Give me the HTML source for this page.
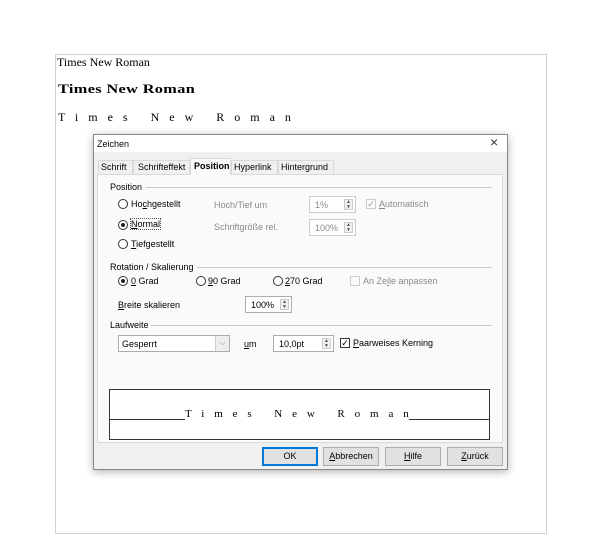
<!DOCTYPE html>
<html><head><meta charset="utf-8"><style>
*{margin:0;padding:0;box-sizing:border-box}
body{width:600px;height:521px;background:#fff;position:relative;overflow:hidden;font-family:"Liberation Sans",sans-serif;font-size:9px;color:#000}
.a{position:absolute;white-space:nowrap}
.tnr{font-family:"Liberation Serif",serif}
.g{color:#8a8a8a}
.rb{position:absolute;width:10px;height:10px;border:1px solid #333;border-radius:50%;background:#fff}
.rb.on::after{content:"";position:absolute;left:2px;top:2px;width:4px;height:4px;border-radius:50%;background:#222}
.line{position:absolute;height:1px;background:#c8c8c8}
.spin{position:absolute;border:1px solid #adadad;background:#fff;height:17px}
.spin .t{position:absolute;left:5px;top:3px}
.spin .s{position:absolute;right:2px;top:2px;width:9px;height:11px;border:1px solid #ccc;background:#f0f0f0;font-size:5px;line-height:5px;text-align:center;color:#555}
.btn{position:absolute;top:447px;height:19px;border:1px solid #adadad;background:#e1e1e1;text-align:center;line-height:17px;font-size:9px}
u{text-decoration:underline}
</style></head><body>
<div class="a" style="left:55px;top:54px;width:492px;height:480px;border:1px solid #d0d0d0"></div>
<div class="a tnr" style="left:57px;top:55px;font-size:12px">Times New Roman</div>
<div class="a tnr" style="left:58px;top:81px;font-size:13px;font-weight:bold;transform:scaleX(1.25);transform-origin:left;letter-spacing:0.3px">Times New Roman</div>
<div class="a tnr" style="left:58px;top:110px;font-size:12px;letter-spacing:10px">Times New Roman</div>

<div class="a" style="left:93px;top:134px;width:415px;height:336px;background:#f0f0f0;border:1px solid #888;box-shadow:0 2px 8px rgba(0,0,0,.3)">
</div>
<div class="a" style="left:94px;top:135px;width:413px;height:17px;background:#fff"></div>
<div class="a" style="left:97px;top:139px;font-size:9px">Zeichen</div>
<div class="a" style="left:490px;top:134px;font-size:14px;color:#333">×</div>

<div class="a" style="left:97px;top:174px;width:406px;height:269px;background:#fafafa;border:1px solid #d9d9d9"></div>
<div class="a" style="left:98px;top:160px;width:35px;height:15px;border:1px solid #d9d9d9;background:#f0f0f0"></div>
<div class="a" style="left:101px;top:162px">Schrift</div>
<div class="a" style="left:133px;top:160px;width:57px;height:15px;border:1px solid #d9d9d9;background:#f0f0f0"></div>
<div class="a" style="left:138px;top:162px">Schrifteffekt</div>
<div class="a" style="left:190px;top:158px;width:41px;height:17px;border:1px solid #d9d9d9;border-bottom:none;background:#fafafa"></div>
<div class="a" style="left:194px;top:161px;font-weight:bold">Position</div>
<div class="a" style="left:231px;top:160px;width:47px;height:15px;border:1px solid #d9d9d9;background:#f0f0f0"></div>
<div class="a" style="left:234px;top:162px">Hyperlink</div>
<div class="a" style="left:278px;top:160px;width:56px;height:15px;border:1px solid #d9d9d9;background:#f0f0f0"></div>
<div class="a" style="left:281px;top:162px">Hintergrund</div>

<div class="a" style="left:110px;top:182px">Position</div>
<div class="line" style="left:146px;top:187px;width:346px"></div>
<div class="rb" style="left:118px;top:199px"></div><div class="a" style="left:131px;top:199px">Ho<u>c</u>hgestellt</div>
<div class="rb on" style="left:118px;top:220px"></div><div class="a" style="left:131px;top:219px;outline:1px dotted #555"><u>N</u>ormal</div>
<div class="rb" style="left:118px;top:239px"></div><div class="a" style="left:131px;top:239px"><u>T</u>iefgestellt</div>
<div class="a g" style="left:214px;top:200px">Hoch/Tief um</div>
<div class="a g" style="left:214px;top:222px">Schriftgröße rel.</div>
<div class="spin g" style="left:309px;top:196px;width:47px;border-color:#ccc"><span class="t">1%</span><span class="s">▲<br>▼</span></div>
<div class="spin g" style="left:309px;top:219px;width:47px;border-color:#ccc"><span class="t">100%</span><span class="s">▲<br>▼</span></div>
<div class="a" style="left:366px;top:199px;width:10px;height:10px;border:1px solid #ccc;color:#999;font-size:9px;line-height:8px;text-align:center">✓</div>
<div class="a g" style="left:379px;top:199px"><u>A</u>utomatisch</div>

<div class="a" style="left:110px;top:262px">Rotation / Skalierung</div>
<div class="line" style="left:197px;top:267px;width:295px"></div>
<div class="rb on" style="left:118px;top:276px"></div><div class="a" style="left:131px;top:276px"><u>0</u> Grad</div>
<div class="rb" style="left:196px;top:276px"></div><div class="a" style="left:208px;top:276px"><u>9</u>0 Grad</div>
<div class="rb" style="left:273px;top:276px"></div><div class="a" style="left:285px;top:276px"><u>2</u>70 Grad</div>
<div class="a" style="left:350px;top:276px;width:10px;height:10px;border:1px solid #ccc"></div>
<div class="a g" style="left:363px;top:276px">An Ze<u>i</u>le anpassen</div>
<div class="a" style="left:118px;top:300px"><u>B</u>reite skalieren</div>
<div class="spin" style="left:245px;top:296px;width:47px"><span class="t">100%</span><span class="s">▲<br>▼</span></div>

<div class="a" style="left:110px;top:320px">Laufweite</div>
<div class="line" style="left:151px;top:325px;width:341px"></div>
<div class="a" style="left:118px;top:335px;width:112px;height:17px;border:1px solid #adadad;background:#fff"></div>
<div class="a" style="left:122px;top:339px">Gesperrt</div>
<div class="a" style="left:215px;top:336px;width:14px;height:15px;background:#eee;border-left:1px solid #ccc;color:#777;font-size:8px;text-align:center;line-height:14px">⌵</div>
<div class="a" style="left:244px;top:339px"><u>u</u>m</div>
<div class="spin" style="left:273px;top:335px;width:61px"><span class="t">10,0pt</span><span class="s">▲<br>▼</span></div>
<div class="a" style="left:340px;top:338px;width:10px;height:10px;border:1px solid #333;background:#fff;font-size:9px;line-height:8px;text-align:center">✓</div>
<div class="a" style="left:353px;top:338px"><u>P</u>aarweises Kerning</div>

<div class="a" style="left:109px;top:389px;width:381px;height:51px;border:1px solid #333;background:#fff"></div>
<div class="a" style="left:110px;top:419px;width:379px;height:1px;background:#333"></div>
<div class="a tnr" style="left:185px;top:409px;font-size:11px;line-height:11px;letter-spacing:9.9px;background:#fff">Times New Roma<span style="letter-spacing:0">n</span></div>

<div class="btn" style="left:262px;width:56px;border-color:#0078d7;border-width:2px;line-height:15px">OK</div>
<div class="btn" style="left:323px;width:56px"><u>A</u>bbrechen</div>
<div class="btn" style="left:385px;width:56px"><u>H</u>ilfe</div>
<div class="btn" style="left:447px;width:56px"><u>Z</u>urück</div>
</body></html>
